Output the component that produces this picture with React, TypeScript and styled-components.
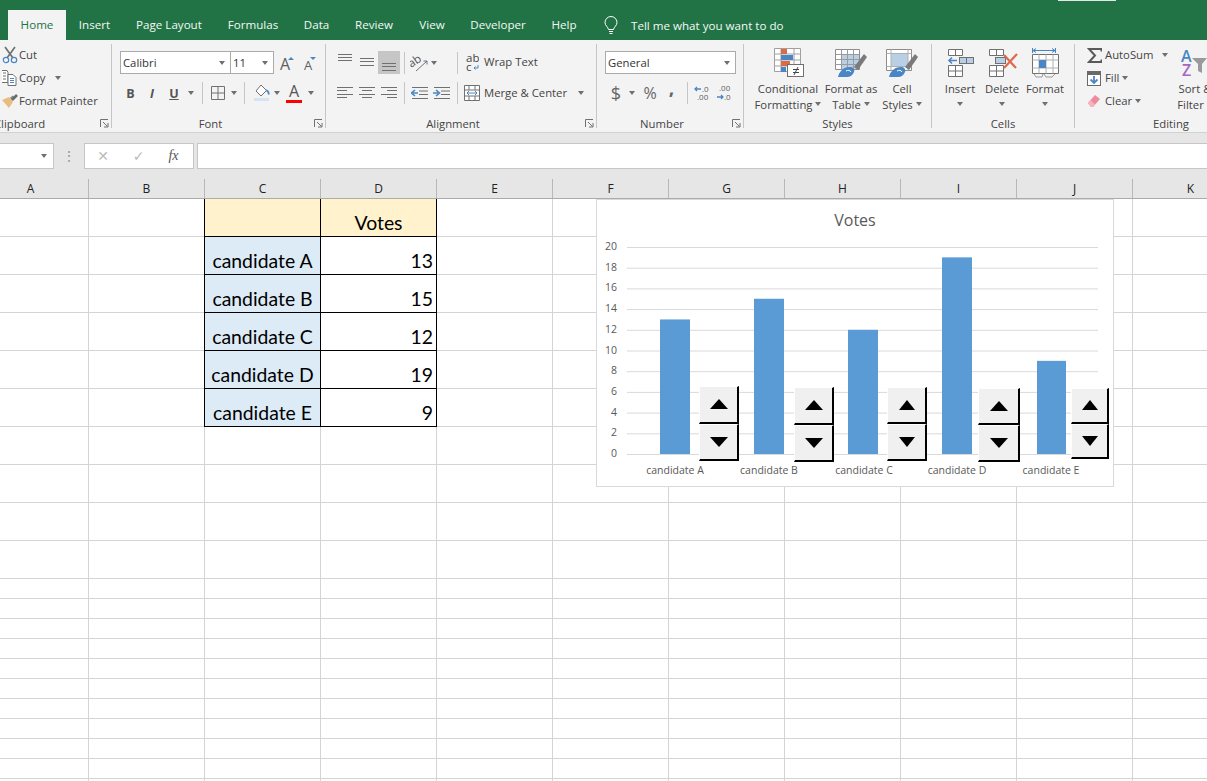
import React from 'react';
import styled, { createGlobalStyle } from 'styled-components';

const GRAY = '#707070';
const BLUE = '#4a86c5';
const LIGHT_BLUE = '#b9cfe6';
const RED = '#e0684b';

const COLUMNS = ['A', 'B', 'C', 'D', 'E', 'F', 'G', 'H', 'I', 'J', 'K'];
const VOTES = [
	{ name: 'candidate A', votes: 13, bar: 660, barWidth: 30, label: 675 },
	{ name: 'candidate B', votes: 15, bar: 754, barWidth: 30, label: 769 },
	{ name: 'candidate C', votes: 12, bar: 848, barWidth: 30, label: 864 },
	{ name: 'candidate D', votes: 19, bar: 942, barWidth: 30, label: 957 },
	{ name: 'candidate E', votes: 9, bar: 1037, barWidth: 29, label: 1051 },
];
const SPINNERS = [
	{ x: 699, y: 386, w: 40, h: 75, arrow: 19 },
	{ x: 794, y: 387, w: 40, h: 75, arrow: 19 },
	{ x: 887, y: 387, w: 40, h: 74, arrow: 17 },
	{ x: 978, y: 388, w: 42, h: 74, arrow: 19 },
	{ x: 1071, y: 388, w: 38, h: 71, arrow: 17 },
];
const TICKS = [0, 2, 4, 6, 8, 10, 12, 14, 16, 18, 20];
const TABS: [string, number][] = [
	['Insert', 57],
	['Page Layout', 92],
	['Formulas', 76],
	['Data', 51],
	['Review', 64],
	['View', 52],
	['Developer', 80],
	['Help', 52],
];

const tickY = (v: number) => 454 - v * 10.35;

function Lines({ rows, w = 16, h = 12 }: { rows: [number, number, number][]; w?: number; h?: number }) {
	return (
		<svg width={w} height={h} viewBox={`0 0 ${w} ${h}`}>
			{rows.map(([a, b, y]) => (
				<line key={`${a}${b}${y}`} x1={a} x2={b} y1={y} y2={y} stroke={GRAY} />
			))}
		</svg>
	);
}

function Launcher() {
	return (
		<svg width="9" height="9" viewBox="0 0 9 9">
			<path d="M.5 8V.5H8M3 3l4.5 4.5M8 4v4H4" fill="none" stroke={GRAY} />
		</svg>
	);
}

function ScissorsIcon() {
	return (
		<svg width="16" height="18" viewBox="0 0 16 18">
			<path d="M3 1l8 11M13 1L5 12" stroke={GRAY} strokeWidth="1.7" />
			<circle cx="4" cy="14" r="2.7" fill="none" stroke={BLUE} strokeWidth="1.2" />
			<circle cx="12" cy="14" r="2.7" fill="none" stroke={BLUE} strokeWidth="1.2" />
		</svg>
	);
}

function CopyIcon() {
	return (
		<svg width="16" height="16" viewBox="0 0 16 16">
			<path d="M-1 .5h6l1 2v10H-1z" fill="#fff" stroke={GRAY} />
			<path d="M1 3h3M1 6h3M1 9h3" stroke={GRAY} />
			<path d="M6 4.500h5l3 3v8H6z" fill="#fff" stroke={GRAY} />
			<path d="M8 8.500h4M8 10.500h4M8 12.500h4" stroke={BLUE} />
		</svg>
	);
}

function PainterIcon() {
	return (
		<svg width="17" height="15" viewBox="0 0 17 15">
			<path d="M1 6l7-3 4 5-4 6z" fill="#e8bd7d" />
			<path d="M9 3.500l3-2 1 1-2 4z" fill="#8a8a8a" />
			<path d="M11 6l5-5" stroke="#6a6a6a" strokeWidth="2.6" />
		</svg>
	);
}

function GrowIcon({ up }: { up: boolean }) {
	return (
		<svg width="20" height="20" viewBox="0 0 20 20">
			<text x={up ? 6 : 8} y="17" fontFamily="Open Sans, sans-serif" fontSize={up ? 16 : 13} fill="#5f5f5f">
				A
			</text>
			<path d={up ? 'M14 7l3-3 3 3z' : 'M14 4h6l-3 3z'} fill={BLUE} />
		</svg>
	);
}

function BordersIcon() {
	return (
		<svg width="14" height="14" viewBox="0 0 14 14">
			<path d="M.5.5h13v13H.5zM7 .5v13M.5 7h13" fill="none" stroke={GRAY} />
		</svg>
	);
}

function FillIcon() {
	return (
		<svg width="17" height="18" viewBox="0 0 17 18">
			<path d="M8 1l5.500 5.500L8 12 3 7z" fill="#fff" stroke={GRAY} />
			<path d="M13 6c2 1 3 3 2.500 4.500" stroke={BLUE} strokeWidth="1.8" fill="none" />
			<rect x="1" y="14" width="15" height="3" fill="#d4e4f4" />
		</svg>
	);
}

function OrientationIcon() {
	return (
		<svg width="18" height="18" viewBox="0 0 18 18">
			<text x="-1" y="11" transform="rotate(-35 5 9)" fontFamily="Open Sans, sans-serif" fontSize="11.5" fill="#555">
				ab
			</text>
			<path d="M6 17L17 7M17 7h-3.500M17 7v3.500" stroke={GRAY} fill="none" />
		</svg>
	);
}

function WrapIcon() {
	return (
		<svg width="14" height="18" viewBox="0 0 14 18" fontFamily="Open Sans, sans-serif" fontSize="11.5" fill="#444">
			<text x="1" y="8">
				ab
			</text>
			<text x="1" y="17">
				c
			</text>
			<path d="M13 11v3H9M10.500 12.500L9 14l1.500 1.500" stroke={BLUE} fill="none" />
		</svg>
	);
}

function IndentIcon({ right }: { right?: boolean }) {
	return (
		<svg width="17" height="12" viewBox="0 0 17 12">
			<path d="M1 .5h16M8 4h9M8 7.500h9M1 11.500h16" stroke={GRAY} />
			<path d={right ? 'M0 6h5M3 3l3.500 3L3 9' : 'M7 6H2M4 3L.5 6 4 9'} stroke={BLUE} strokeWidth="1.6" fill="none" />
		</svg>
	);
}

function MergeIcon() {
	return (
		<svg width="16" height="16" viewBox="0 0 16 16">
			<path d="M.5.5h15v15H.5zM.5 5h15M.5 11h15M5 .5V5M11 .5V5M5 11v4.500M11 11v4.500" fill="#fff" stroke={GRAY} />
			<path d="M3 8h10M5 6L3 8l2 2M11 6l2 2-2 2" stroke={BLUE} fill="none" />
		</svg>
	);
}

function DecimalIcon({ more }: { more?: boolean }) {
	return (
		<svg width="16" height="18" viewBox="0 0 16 18" fontFamily="Open Sans, sans-serif" fontSize="8" fill="#5f5f5f">
			{more ? (
				<>
					<path d="M7 5H1M3 3L1 5l2 2" stroke={BLUE} fill="none" strokeWidth="1.3" />
					<text x="8" y="8">
						.0
					</text>
					<text x="3" y="16">
						.00
					</text>
				</>
			) : (
				<>
					<text x="3" y="7">
						.00
					</text>
					<path d="M1 13h6M5 11l2 2-2 2" stroke={BLUE} fill="none" strokeWidth="1.3" />
					<text x="8" y="16">
						.0
					</text>
				</>
			)}
		</svg>
	);
}

function ConditionalIcon() {
	return (
		<svg width="31" height="29" viewBox="0 0 31 29">
			<path d="M1.500.5h26v23h-26zM1.500 6h26M1.500 12h26M1.500 18h26M8 .5v23M21 .5v23" fill="#fff" stroke="#a0a0a0" />
			<rect x="8" y="1" width="6" height="5" fill="#dc6a45" />
			<rect x="8" y="7" width="12" height="5" fill={BLUE} />
			<rect x="8" y="13" width="9" height="5" fill="#dc6a45" />
			<rect x="8" y="19" width="5" height="5" fill={BLUE} />
			<rect x="14.500" y="16.500" width="16" height="12" fill="#fff" stroke={GRAY} />
			<path d="M20 21.500h6M20 24.500h6M25 19l-4 8" stroke="#444" fill="none" />
		</svg>
	);
}

function BrushOverlay() {
	return (
		<>
			<path d="M29 5l3 3-9 13-4-3z" fill="#7a7a7a" />
			<path d="M3 28c1-5 5-10 12-10 3 0 5 2 4 5-1 3-4 5-7 5z" fill={BLUE} />
			<path d="M11 22c2-1 4-1 5 1" stroke="#fff" fill="none" />
		</>
	);
}

function TableStyleIcon() {
	return (
		<svg width="32" height="28" viewBox="0 0 32 28">
			<path d="M.5.5h24v20H.5z" fill="#fff" stroke="#8c8c8c" />
			<rect x="6" y="6" width="18" height="14" fill={LIGHT_BLUE} />
			<path d="M.5 5.500h24M.5 10.500h24M.5 15.500h24M6.500.5v20M12.500.5v20M18.500.5v20" stroke="#9a9a9a" fill="none" />
			<BrushOverlay />
		</svg>
	);
}

function CellStylesIcon() {
	return (
		<svg width="32" height="28" viewBox="0 0 32 28">
			<path d="M.5.5h25v21H.5z" fill="#fff" stroke="#8c8c8c" />
			<rect x="5" y="5" width="17" height="12" fill={LIGHT_BLUE} />
			<path d="M.5 4.500h25M.5 17.500h25M5 .5v21M22 .5v21" stroke="#b0b0b0" fill="none" />
			<BrushOverlay />
		</svg>
	);
}

function InsertIcon() {
	return (
		<svg width="28" height="28" viewBox="0 0 28 28">
			<path d="M2.500.5h14v6h-14zM9.500.5v6M2.500 16.500h14v11h-14zM2.500 22h14M9.500 16.500v11" fill="#fff" stroke={GRAY} />
			<rect x="13.500" y="8.500" width="14" height="6" fill={LIGHT_BLUE} stroke={GRAY} />
			<path d="M20.500 8.500v6" stroke={GRAY} />
			<path d="M11 11.500H3M6 8.500l-3 3 3 3" stroke={BLUE} strokeWidth="1.6" fill="none" />
		</svg>
	);
}

function DeleteIcon() {
	return (
		<svg width="31" height="28" viewBox="0 0 31 28">
			<path d="M2.500.5h14v6h-14zM9.500.5v6M2.500 16.500h14v11h-14zM2.500 22h14M9.500 16.500v11" fill="#fff" stroke={GRAY} />
			<rect x="8.500" y="8.500" width="10" height="6" fill={LIGHT_BLUE} stroke={GRAY} />
			<path d="M17 6l12 13M30 5L17 19" stroke={RED} strokeWidth="2.2" />
		</svg>
	);
}

function FormatIcon() {
	return (
		<svg width="29" height="31" viewBox="0 0 29 31">
			<path d="M1.500 1v5M24.500 1v5M2 3.500h22M5 1.500L2 3.500l3 2M21 1.500l3 2-3 2" stroke={BLUE} fill="none" />
			<path d="M1.500 7.500h26v19h-26z" fill="#fff" stroke={GRAY} />
			<path d="M1.500 13h26M1.500 21h26M8 7.500v19M15 7.500v19M22 7.500v19" stroke="#b0b0b0" />
			<rect x="8" y="13" width="7" height="8" fill={BLUE} />
			<path d="M3 27l2 3h6l1-3M13 27l2 3h6l3-3" fill="none" stroke="#9a9a9a" />
		</svg>
	);
}

function SigmaIcon() {
	return (
		<svg width="15" height="15" viewBox="0 0 15 15">
			<path d="M14.500 3.500V1H2l6 6.500L2 14h12.500v-2.500" fill="none" stroke="#5a5a5a" strokeWidth="2" />
		</svg>
	);
}

function FillDownIcon() {
	return (
		<svg width="14" height="15" viewBox="0 0 14 15">
			<rect x=".5" y=".5" width="13" height="14" fill="#fff" stroke="#6a6a6a" />
			<rect x="1" y="1" width="12" height="3" fill="#6a6a6a" />
			<path d="M7 5v7M3.500 8.500L7 12l3.500-3.500" stroke={BLUE} strokeWidth="1.8" fill="none" />
		</svg>
	);
}

function EraserIcon() {
	return (
		<svg width="14" height="14" viewBox="0 0 14 14">
			<path d="M1 9l7-8 5 4-7 8H4z" fill="#ee8a9b" />
			<path d="M1 9l3 4h2l2-2.500-4-4z" fill="#f4b3be" />
		</svg>
	);
}

function SortIcon() {
	return (
		<svg width="34" height="30" viewBox="0 0 34 30" fontFamily="Open Sans, sans-serif" fontWeight="600" fontSize="16">
			<text x="3" y="14" fill={BLUE}>
				A
			</text>
			<text x="4" y="28" fill="#a368c0">
				Z
			</text>
			<path d="M14 10h15l-5 6v9l-4-2v-7z" fill="#9a9a9a" />
		</svg>
	);
}

function BulbIcon() {
	return (
		<svg width="14" height="19" viewBox="0 0 14 19">
			<path
				d="M4.500 13.500C4 11 1 9.500 1 6.500a6 6 0 0 1 12 0c0 3-3 4.500-3.500 7zM5 15.500h4M5.500 17.500h3"
				fill="none"
				stroke="#fff"
			/>
		</svg>
	);
}

export default function App() {
	return (
		<Page>
			<GlobalStyle />
			<TitleBar>
				<ActiveTab>Home</ActiveTab>
				{TABS.map(([label, w]) => (
					<Tab key={label} $w={w}>
						{label}
					</Tab>
				))}
				<TellMe>
					<BulbIcon />
					<span>Tell me what you want to do</span>
				</TellMe>
				<SignIn />
			</TitleBar>

			<Ribbon>
				<Group $w={112}>
					<Stack>
						<Row>
							<Slot $w={19}>
								<ScissorsIcon />
							</Slot>
							<Text>Cut</Text>
						</Row>
						<Row>
							<Slot $w={19}>
								<CopyIcon />
							</Slot>
							<Text>Copy</Text>
							<Slot $w={26}>
								<Caret />
							</Slot>
						</Row>
						<Row>
							<Slot $w={19}>
								<PainterIcon />
							</Slot>
							<Text>Format Painter</Text>
						</Row>
					</Stack>
					<ClippedLabel>Clipboard</ClippedLabel>
					<LauncherSpot>
						<Launcher />
					</LauncherSpot>
				</Group>

				<Group $w={214}>
					<Tools>
						<Row $h={23}>
							<Combo $w={111}>
								Calibri
								<Caret />
							</Combo>
							<Combo $w={44} $joined>
								11
								<Caret />
							</Combo>
							<Slot $w={20}>
								<GrowIcon up />
							</Slot>
							<Slot $w={24}>
								<GrowIcon up={false} />
							</Slot>
						</Row>
						<Row>
							<Slot $w={21}>
								<Glyph $bold>B</Glyph>
							</Slot>
							<Slot $w={22}>
								<Glyph $bold $italic>
									I
								</Glyph>
							</Slot>
							<Slot $w={22}>
								<Glyph $bold $underline>
									U
								</Glyph>
							</Slot>
							<Slot $w={12}>
								<Caret />
							</Slot>
							<Slot $w={10}>
								<Sep />
							</Slot>
							<Slot $w={22}>
								<BordersIcon />
							</Slot>
							<Slot $w={10}>
								<Caret />
							</Slot>
							<Slot $w={11}>
								<Sep />
							</Slot>
							<Slot $w={22}>
								<FillIcon />
							</Slot>
							<Slot $w={10}>
								<Caret />
							</Slot>
							<Slot $w={24}>
								<FontColor>A</FontColor>
							</Slot>
							<Slot $w={10}>
								<Caret />
							</Slot>
						</Row>
					</Tools>
					<GroupLabel $launcher>Font</GroupLabel>
					<LauncherSpot>
						<Launcher />
					</LauncherSpot>
				</Group>

				<Group $w={271}>
					<Tools>
						<Row $h={23}>
							<Slot $w={22}>
								<Lines w={16} h={23} rows={[[1, 15, 3.5], [1, 15, 6.5], [1, 15, 9.5]]} />
							</Slot>
							<Slot $w={22}>
								<Lines w={16} h={23} rows={[[1, 15, 7.5], [1, 15, 10.5], [1, 15, 14.5]]} />
							</Slot>
							<Highlight>
								<Lines w={16} h={23} rows={[[1, 15, 12.5], [1, 15, 15.5], [1, 15, 19.5]]} />
							</Highlight>
							<Slot $w={8}>
								<Sep />
							</Slot>
							<Slot $w={22}>
								<OrientationIcon />
							</Slot>
							<Slot $w={8}>
								<Caret />
							</Slot>
							<Slot $w={14} />
							<Slot $w={10}>
								<Sep />
							</Slot>
							<Slot $w={20}>
								<WrapIcon />
							</Slot>
							<WideText>Wrap Text</WideText>
						</Row>
						<Row>
							<Slot $w={22}>
								<Lines rows={[[0, 16, 0.5], [0, 10, 3.5], [0, 16, 7.5], [0, 10, 10.5]]} />
							</Slot>
							<Slot $w={22}>
								<Lines rows={[[0, 16, 0.5], [3, 13, 3.5], [0, 16, 7.5], [3, 13, 10.5]]} />
							</Slot>
							<Slot $w={22}>
								<Lines rows={[[0, 16, 0.5], [6, 16, 3.5], [0, 16, 7.5], [6, 16, 10.5]]} />
							</Slot>
							<Slot $w={8}>
								<Sep />
							</Slot>
							<Slot $w={22}>
								<IndentIcon />
							</Slot>
							<Slot $w={22}>
								<IndentIcon right />
							</Slot>
							<Slot $w={10}>
								<Sep />
							</Slot>
							<Slot $w={20}>
								<MergeIcon />
							</Slot>
							<WideText $w={92}>Merge &amp; Center</WideText>
							<Slot $w={10}>
								<Caret />
							</Slot>
						</Row>
					</Tools>
					<GroupLabel $launcher>Alignment</GroupLabel>
					<LauncherSpot>
						<Launcher />
					</LauncherSpot>
				</Group>

				<Group $w={147}>
					<Tools>
						<Row $h={23}>
							<Combo $w={131}>
								General
								<Caret />
							</Combo>
						</Row>
						<Row>
							<Slot $w={22}>
								<NumberGlyph $size={18}>$</NumberGlyph>
							</Slot>
							<Slot $w={10}>
								<Caret />
							</Slot>
							<Slot $w={26}>
								<NumberGlyph $size={16}>%</NumberGlyph>
							</Slot>
							<Slot $w={17}>
								<CommaGlyph $size={16}>,</CommaGlyph>
							</Slot>
							<Slot $w={14}>
								<Sep />
							</Slot>
							<Slot $w={16}>
								<DecimalIcon more />
							</Slot>
							<Slot $w={28}>
								<DecimalIcon />
							</Slot>
						</Row>
					</Tools>
					<GroupLabel $launcher>Number</GroupLabel>
					<LauncherSpot>
						<Launcher />
					</LauncherSpot>
				</Group>

				<Group $w={188}>
					<BigRow $pad={10}>
						<BigButton $w={68}>
							<BigIcon>
								<ConditionalIcon />
							</BigIcon>
							<BigText>Conditional</BigText>
							<BigText>
								Formatting <Caret />
							</BigText>
						</BigButton>
						<BigButton $w={58}>
							<BigIcon>
								<TableStyleIcon />
							</BigIcon>
							<BigText>Format as</BigText>
							<BigText>
								Table <Caret />
							</BigText>
						</BigButton>
						<BigButton $w={44}>
							<BigIcon>
								<CellStylesIcon />
							</BigIcon>
							<BigText>Cell</BigText>
							<BigText>
								Styles <Caret />
							</BigText>
						</BigButton>
					</BigRow>
					<GroupLabel>Styles</GroupLabel>
				</Group>

				<Group $w={143}>
					<BigRow $pad={8}>
						<BigButton $w={40}>
							<BigIcon>
								<InsertIcon />
							</BigIcon>
							<BigText>Insert</BigText>
							<BigText>
								<Caret />
							</BigText>
						</BigButton>
						<BigButton $w={44}>
							<BigIcon>
								<DeleteIcon />
							</BigIcon>
							<BigText>Delete</BigText>
							<BigText>
								<Caret />
							</BigText>
						</BigButton>
						<BigButton $w={42}>
							<BigIcon>
								<FormatIcon />
							</BigIcon>
							<BigText>Format</BigText>
							<BigText>
								<Caret />
							</BigText>
						</BigButton>
					</BigRow>
					<GroupLabel>Cells</GroupLabel>
				</Group>

				<Group $w={192} $last>
					<BigRow $pad={8}>
						<EditStack>
							<Row>
								<Slot $w={22}>
									<SigmaIcon />
								</Slot>
								<Text>AutoSum</Text>
								<Slot $w={24}>
									<Caret />
								</Slot>
							</Row>
							<Row>
								<Slot $w={22}>
									<FillDownIcon />
								</Slot>
								<Text>Fill</Text>
								<Slot $w={12}>
									<Caret />
								</Slot>
							</Row>
							<Row>
								<Slot $w={22}>
									<EraserIcon />
								</Slot>
								<Text>Clear</Text>
								<Slot $w={12}>
									<Caret />
								</Slot>
							</Row>
						</EditStack>
						<BigButton $w={44}>
							<BigIcon>
								<SortIcon />
							</BigIcon>
							<BigText>Sort &amp;</BigText>
							<BigText>
								Filter <Caret />
							</BigText>
						</BigButton>
					</BigRow>
					<GroupLabel>Editing</GroupLabel>
				</Group>
			</Ribbon>

			<FormulaBar>
				<NameBox>
					<Caret />
				</NameBox>
				<Grip>⋮</Grip>
				<FxBox>
					<Slot $w={36}>
						<FaintMark>✕</FaintMark>
					</Slot>
					<Slot $w={35}>
						<FaintMark>✓</FaintMark>
					</Slot>
					<Slot $w={35}>
						<FxMark>fx</FxMark>
					</Slot>
				</FxBox>
				<FormulaInput />
			</FormulaBar>

			<ColumnHeaders>
				{COLUMNS.map((c) => (
					<ColumnHeader key={c}>{c}</ColumnHeader>
				))}
			</ColumnHeaders>

			<SheetArea>
				<SheetGrid>
					{Array.from({ length: 21 }).flatMap((_, r) =>
						COLUMNS.map((c, i) => {
							const inTable = r < 6 && (c === 'C' || c === 'D');
							const row = VOTES[r - 1];
							let tone: 'head' | 'name' | undefined;
							if (inTable && r === 0) tone = 'head';
							if (inTable && r > 0 && c === 'C') tone = 'name';
							return (
								<Cell
									key={`${r}-${i}`}
									$boxed={inTable}
									$first={inTable && c === 'C'}
									$tone={tone}
									$right={inTable && r > 0 && c === 'D'}
								>
									{inTable && r === 0 && c === 'D' && 'Votes'}
									{inTable && r > 0 && (c === 'C' ? row.name : row.votes)}
								</Cell>
							);
						}),
					)}
				</SheetGrid>

				<ChartFrame>
					<svg width="516" height="286" viewBox="597 200 516 286" fontFamily="Open Sans, sans-serif" fill="#595959">
						<text x="855" y="226" fontSize="16" textAnchor="middle">
							Votes
						</text>
						{TICKS.map((t) => (
							<g key={t}>
								<line x1="627" x2="1098" y1={tickY(t) + 0.5} y2={tickY(t) + 0.5} stroke="#d9d9d9" />
								<text x="617" y={tickY(t) + 3} fontSize="10.5" textAnchor="end">
									{t}
								</text>
							</g>
						))}
						{VOTES.map((v) => (
							<g key={v.name}>
								<rect x={v.bar} y={tickY(v.votes)} width={v.barWidth} height={v.votes * 10.35} fill="#5b9bd5" />
								<text x={v.label} y="474" fontSize="10.5" textAnchor="middle">
									{v.name}
								</text>
							</g>
						))}
					</svg>
				</ChartFrame>

				{SPINNERS.map((s) => (
					<Spinner key={s.x} $x={s.x} $y={s.y - 199} $w={s.w} $h={s.h}>
						<SpinButton>
							<ArrowUp $size={s.arrow} />
						</SpinButton>
						<SpinButton>
							<ArrowDown $size={s.arrow} />
						</SpinButton>
					</Spinner>
				))}
			</SheetArea>
		</Page>
	);
}

const GlobalStyle = createGlobalStyle`
	html, body {
		margin: 0;
		padding: 0;
		background: #fff;
		overflow: hidden;
	}
	* {
		box-sizing: border-box;
	}
`;

const UI_FONT = `'Open Sans', 'Noto Sans', sans-serif`;

const Page = styled.div`
	width: 1207px;
	height: 781px;
	overflow: hidden;
	font-family: ${UI_FONT};
	font-size: 11.3px;
	color: #444;
`;

const TitleBar = styled.div`
	position: relative;
	display: flex;
	align-items: flex-end;
	height: 40px;
	padding-left: 8px;
	background: #217346;
	color: #fff;
`;

const ActiveTab = styled.div`
	width: 58px;
	height: 30px;
	line-height: 30px;
	text-align: center;
	background: #f3f3f3;
	color: #217346;
	font-size: 11.6px;
`;

const Tab = styled.div<{ $w: number }>`
	width: ${(p) => p.$w}px;
	height: 30px;
	line-height: 30px;
	text-align: center;
	font-size: 11.6px;
	color: #f4f8f5;
`;

const TellMe = styled.div`
	display: flex;
	align-items: center;
	gap: 13px;
	height: 30px;
	margin-left: 14px;
	font-size: 11.6px;
	color: #f4f8f5;
`;

const SignIn = styled.div`
	position: absolute;
	top: 0;
	left: 1058px;
	width: 58px;
	height: 1px;
	background: #e6e6e6;
`;

const Ribbon = styled.div`
	display: flex;
	height: 93px;
	padding-top: 4px;
	overflow: hidden;
	background: #f3f3f3;
	border-bottom: 1px solid #d2d2d2;
`;

const Group = styled.section<{ $w: number; $last?: boolean }>`
	position: relative;
	flex: none;
	display: flex;
	flex-direction: column;
	width: ${(p) => p.$w}px;
	height: 84px;
	border-right: ${(p) => (p.$last ? 'none' : '1px solid #c6c6c6')};
`;

const Stack = styled.div`
	flex: 1;
	display: flex;
	flex-direction: column;
	gap: 1px;
`;

const EditStack = styled(Stack)`
	flex: none;
	width: 90px;
`;

const Tools = styled.div`
	flex: 1;
	display: flex;
	flex-direction: column;
	gap: 8px;
	padding: 7px 0 0 8px;
`;

const Row = styled.div<{ $h?: number }>`
	display: flex;
	align-items: center;
	flex: none;
	height: ${(p) => p.$h ?? 22}px;
	white-space: nowrap;
`;

const Slot = styled.span<{ $w: number }>`
	flex: none;
	display: inline-flex;
	align-items: center;
	justify-content: center;
	width: ${(p) => p.$w}px;
`;

const Highlight = styled(Slot).attrs({ $w: 22 })`
	height: 23px;
	background: #c6c6c6;
`;

const Text = styled.span`
	padding-bottom: 2px;
	white-space: nowrap;
`;

const WideText = styled.span<{ $w?: number }>`
	flex: none;
	margin-left: 2px;
	padding-bottom: 2px;
	width: ${(p) => (p.$w ? `${p.$w}px` : 'auto')};
`;

const Caret = styled.i`
	display: inline-block;
	flex: none;
	width: 0;
	height: 0;
	vertical-align: middle;
	border-left: 3.5px solid transparent;
	border-right: 3.5px solid transparent;
	border-top: 4px solid #6f6f6f;
`;

const Sep = styled.i`
	display: block;
	width: 1px;
	height: 22px;
	background: #c6c6c6;
`;

const GroupLabel = styled.div<{ $launcher?: boolean }>`
	height: 12px;
	line-height: 16px;
	text-align: center;
	white-space: nowrap;
	padding-right: ${(p) => (p.$launcher ? 16 : 0)}px;
`;

const ClippedLabel = styled(GroupLabel)`
	margin-left: -6px;
	text-align: left;
`;

const LauncherSpot = styled.span`
	position: absolute;
	right: 2px;
	bottom: 0;
	line-height: 0;
`;

const Combo = styled.div<{ $w: number; $joined?: boolean }>`
	flex: none;
	display: flex;
	align-items: center;
	justify-content: space-between;
	width: ${(p) => p.$w}px;
	height: 23px;
	margin-left: ${(p) => (p.$joined ? -1 : 0)}px;
	padding: 0 5px 0 2px;
	background: #fff;
	border: 1px solid #ababab;
	color: #333;
`;

const Glyph = styled.span<{ $bold?: boolean; $italic?: boolean; $underline?: boolean }>`
	font-size: 12.5px;
	color: #555;
	font-weight: ${(p) => (p.$bold ? 700 : 400)};
	font-style: ${(p) => (p.$italic ? 'italic' : 'normal')};
	text-decoration: ${(p) => (p.$underline ? 'underline' : 'none')};
`;

const FontColor = styled.span`
	display: block;
	width: 16px;
	height: 19px;
	line-height: 15px;
	text-align: center;
	font-size: 16px;
	color: #555;
	border-bottom: 3px solid #ff0000;
`;

const NumberGlyph = styled.span<{ $size: number }>`
	font-size: ${(p) => p.$size}px;
	color: #666;
`;

const CommaGlyph = styled(NumberGlyph)`
	padding-bottom: 9px;
	font-weight: 800;
`;

const BigRow = styled.div<{ $pad: number }>`
	flex: 1;
	display: flex;
	padding-left: ${(p) => p.$pad}px;
`;

const BigButton = styled.div<{ $w: number }>`
	flex: none;
	display: flex;
	flex-direction: column;
	align-items: center;
	width: ${(p) => p.$w}px;
`;

const BigIcon = styled.div`
	display: flex;
	align-items: center;
	justify-content: center;
	height: 36px;
	padding-top: 1px;
`;

const BigText = styled.div`
	display: flex;
	align-items: center;
	justify-content: center;
	gap: 3px;
	height: 16px;
	white-space: nowrap;
`;

const FormulaBar = styled.div`
	display: flex;
	height: 46px;
	padding-top: 10px;
	background: #e6e6e6;
`;

const Box = styled.div`
	height: 26px;
	background: #fff;
	border: 1px solid #c6c6c6;
`;

const NameBox = styled(Box)`
	flex: none;
	display: flex;
	align-items: center;
	justify-content: flex-end;
	width: 54px;
	padding-right: 6px;
	border-left: none;
`;

const Grip = styled.span`
	flex: none;
	width: 30px;
	line-height: 26px;
	text-align: center;
	color: #9a9a9a;
	font-size: 14px;
`;

const FxBox = styled(Box)`
	flex: none;
	display: flex;
	align-items: center;
	width: 110px;
`;

const FaintMark = styled.span`
	font-family: 'DejaVu Sans', sans-serif;
	font-size: 14px;
	color: #bcbcbc;
`;

const FxMark = styled.span`
	font-family: 'Liberation Serif', serif;
	font-style: italic;
	font-size: 14px;
	color: #555;
`;

const FormulaInput = styled(Box)`
	flex: 1;
	margin-left: 3px;
	border-right: none;
`;

const ColumnHeaders = styled.div`
	display: grid;
	grid-template-columns: repeat(11, 116px);
	height: 20px;
	margin-left: -27px;
	background: #e6e6e6;
	border-bottom: 1px solid #ababab;
`;

const ColumnHeader = styled.div`
	line-height: 19px;
	text-align: center;
	font-size: 12px;
	color: #222;
	border-right: 1px solid #b8b8b8;
`;

const SheetArea = styled.div`
	position: relative;
	height: 582px;
	overflow: hidden;
`;

const SheetGrid = styled.div`
	display: grid;
	grid-template-columns: repeat(11, 116px);
	grid-template-rows: repeat(10, 38px) repeat(11, 20px);
	margin-left: -27px;
`;

const TONES = { head: '#fff2cc', name: '#ddebf7' };

const Cell = styled.div<{ $boxed?: boolean; $first?: boolean; $tone?: 'head' | 'name'; $right?: boolean }>`
	display: flex;
	align-items: flex-end;
	justify-content: ${(p) => (p.$right ? 'flex-end' : 'center')};
	padding: 0 ${(p) => (p.$right ? 3 : 0)}px 1px 0;
	font-family: Lato, sans-serif;
	font-size: 19.4px;
	line-height: 25px;
	color: #000;
	background: ${(p) => (p.$tone ? TONES[p.$tone] : '#fff')};
	border-right: 1px solid ${(p) => (p.$boxed ? '#000' : '#d4d4d4')};
	border-bottom: 1px solid ${(p) => (p.$boxed ? '#000' : '#d4d4d4')};
	box-shadow: ${(p) => (p.$first ? '-1px 0 0 #000' : 'none')};
`;

const ChartFrame = styled.div`
	position: absolute;
	left: 596px;
	top: 0;
	width: 518px;
	height: 288px;
	background: #fff;
	border: 1px solid #d9d9d9;
	line-height: 0;
`;

const Spinner = styled.div<{ $x: number; $y: number; $w: number; $h: number }>`
	position: absolute;
	left: ${(p) => p.$x}px;
	top: ${(p) => p.$y}px;
	width: ${(p) => p.$w}px;
	height: ${(p) => p.$h}px;
	display: flex;
	flex-direction: column;
`;

const SpinButton = styled.div`
	flex: 1;
	display: flex;
	align-items: center;
	justify-content: center;
	background: #f0f0f0;
	border-top: 1px solid #fff;
	border-left: 1px solid #fff;
	border-right: 2px solid #000;
	border-bottom: 2px solid #000;
`;

const ArrowUp = styled.i<{ $size: number }>`
	width: 0;
	height: 0;
	border-left: ${(p) => p.$size / 2}px solid transparent;
	border-right: ${(p) => p.$size / 2}px solid transparent;
	border-bottom: 10px solid #000;
`;

const ArrowDown = styled.i<{ $size: number }>`
	width: 0;
	height: 0;
	border-left: ${(p) => p.$size / 2}px solid transparent;
	border-right: ${(p) => p.$size / 2}px solid transparent;
	border-top: 10px solid #000;
`;
